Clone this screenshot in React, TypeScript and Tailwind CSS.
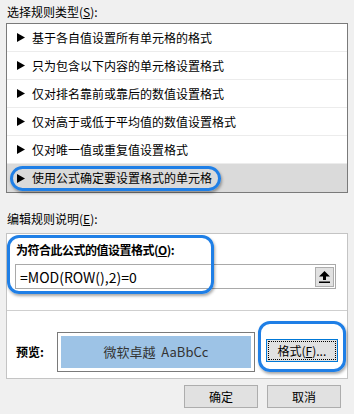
import React from 'react';

const FONT = '"Noto Sans CJK SC", "Noto Sans", sans-serif';

const rules = [
  '基于各自值设置所有单元格的格式',
  '只为包含以下内容的单元格设置格式',
  '仅对排名靠前或靠后的数值设置格式',
  '仅对高于或低于平均值的数值设置格式',
  '仅对唯一值或重复值设置格式',
  '使用公式确定要设置格式的单元格',
];

// small black pointer in front of each rule
const Pointer: React.FC = () => (
  <svg width="8" height="9" viewBox="0 0 8 9" className="shrink-0">
    <polygon points="0,0 8,4.5 0,9" fill="#000" />
  </svg>
);

const RuleRow: React.FC<{ text: string; selected: boolean; last: boolean }> = ({ text, selected, last }) => (
  <div
    className={`relative flex h-[28px] items-center gap-[7px] pl-[10px] ${selected ? 'bg-[#dadada]' : 'bg-white'} ${last ? '' : 'border-b border-[#ececec]'}`}
  >
    <Pointer />
    <span className="text-[12px] leading-[16px] text-black">{text}</span>
    {selected && (
      <div className="pointer-events-none absolute left-[3px] top-[2px] h-[25px] w-[211px] rounded-full border-[3px] border-[#1f7fe6] shadow-[1px_2px_3px_rgba(0,0,0,0.35)]" />
    )}
  </div>
);

const UploadIcon: React.FC = () => (
  <svg width="11" height="12" viewBox="0 0 11 12">
    <polygon points="5.5,0 11,5.5 7,5.5 7,9 4,9 4,5.5 0,5.5" fill="#000" />
    <rect x="0" y="10.5" width="11" height="1.5" fill="#000" />
  </svg>
);

const App: React.FC = () => {
  return (
    <div className="flex h-[414px] w-[354px] flex-col bg-[#f0f0f0] px-[6px] text-black" style={{ fontFamily: FONT }}>
      <div className="pl-[1px] pt-[4px] text-[12px] leading-[16px]">
        选择规则类型(<span className="underline">S</span>):
      </div>

      <div className="mt-[3px] h-[170px] border border-[#7a7a7a] bg-white">
        {rules.map((r, i) => (
          <RuleRow key={r} text={r} selected={i === rules.length - 1} last={i === rules.length - 1} />
        ))}
      </div>

      <div className="pl-[1px] pt-[18px] text-[12px] leading-[16px]">
        编辑规则说明(<span className="underline">E</span>):
      </div>

      <div className="relative mt-[6px] flex h-[146px] flex-col border border-[#c4c4c4] bg-white">
        <div className="pl-[9px] pt-[8px] text-[12px] font-bold leading-[16px] tracking-[-0.5px]">
          为符合此公式的值设置格式(<span className="underline">O</span>):
        </div>
        <div className="ml-[8px] mr-[11px] mt-[6px] flex h-[25px] items-center justify-between border border-[#a9a9a9] bg-white pl-[4px] pr-[1px]">
          <span className="text-[14px] leading-[18px]">=MOD(ROW(),2)=0</span>
          <div className="flex h-[20px] w-[19px] items-center justify-center border border-[#adadad] bg-[#e1e1e1]">
            <UploadIcon />
          </div>
        </div>
        {/* annotation around the formula label and input */}
        <div className="pointer-events-none absolute left-[0px] top-[1px] h-[59px] w-[207px] rounded-[12px] border-[3px] border-[#1f7fe6] shadow-[1px_2px_3px_rgba(0,0,0,0.35)]" />

        <div className="mt-[21px] border-t border-[#cfcfcf]" />

        <div className="mt-[10px] flex items-end pl-[9px]">
          <span className="mb-[12px] text-[12px] font-bold leading-[16px]">预览:</span>
          <div className="ml-[13px] h-[40px] w-[198px] border border-[#7a7a7a] bg-white p-[3px]">
            <div className="flex h-full items-center justify-center bg-[#9dc3e6] text-[13px] leading-[16px] text-[#333]">
              微软卓越&nbsp;&nbsp;AaBbCc
            </div>
          </div>
          <div className="ml-[3px] rounded-[12px] border-[3px] border-[#1f7fe6] px-[5px] pb-[7px] pt-[15px] shadow-[1px_2px_3px_rgba(0,0,0,0.35)]">
            <div className="flex h-[23px] w-[72px] items-center justify-center border border-[#0078d7] bg-[#e1e1e1] p-[1px]">
              <div className="flex h-full w-full items-center justify-center border border-dotted border-black text-[12px] leading-[16px]">
                格式(<span className="underline">F</span>)...
              </div>
            </div>
          </div>
        </div>
      </div>

      <div className="mt-[6px] flex justify-end gap-[9px] pr-[7px]">
        <button className="h-[23px] w-[74px] border border-[#adadad] bg-[#e1e1e1] text-[12px] leading-[16px]">确定</button>
        <button className="h-[23px] w-[74px] border border-[#adadad] bg-[#e1e1e1] text-[12px] leading-[16px]">取消</button>
      </div>
    </div>
  );
};

export default App;
